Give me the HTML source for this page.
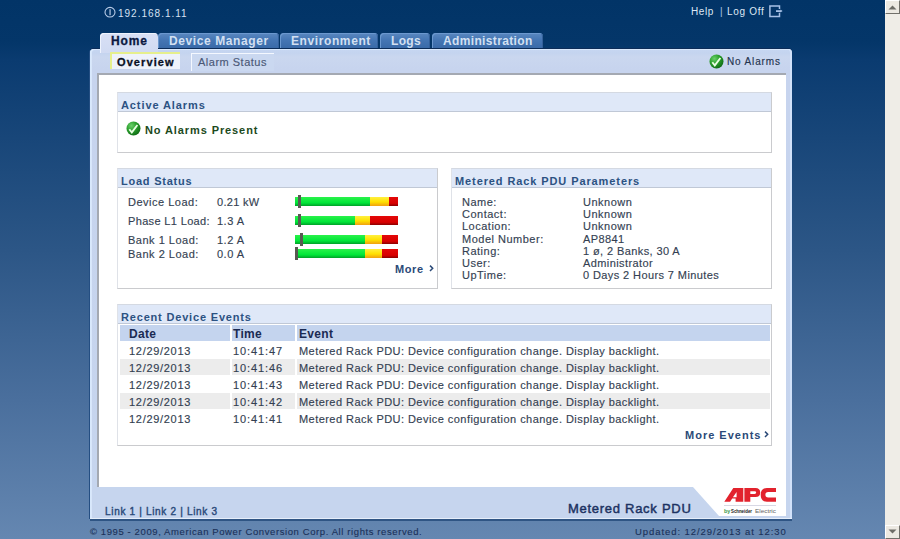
<!DOCTYPE html>
<html><head><meta charset="utf-8">
<style>
*{margin:0;padding:0;box-sizing:border-box}
html,body{width:900px;height:539px;overflow:hidden}
body{position:relative;font-family:"Liberation Sans",sans-serif;font-size:11px;color:#343f52;-webkit-text-stroke:0.15px;
background:linear-gradient(to bottom,#023467 0px,#043669 42px,#0a3b70 60px,#2c5686 250px,#4a6f9d 400px,#6587b1 539px)}
.a{position:absolute;white-space:nowrap;line-height:12px}
.b{font-weight:bold;-webkit-text-stroke:0}
#scroll{position:absolute;left:885px;top:0;width:15px;height:539px;background:#efede7}
.sbtn{position:absolute;left:0;width:15px;height:14px;background:#ece9e2;border:1px solid #fff;border-right-color:#71706a;border-bottom-color:#71706a}
#panel{position:absolute;left:90px;top:49px;width:702px;height:470px;background:linear-gradient(#c6d6f2,#c4d4ef 4px,#cad7ef 8px,#c7d4ee 20px,#c6d5ee);border-radius:4px 4px 0 0;
 box-shadow:inset 1px 1px 0 #d8e8fc,0 -1px 0 #0c2c58,inset 2px 0 0 #d8e6fa,inset -2px 0 0 #d2e2fa,-1px 0 0 #244e82}
#white{position:absolute;left:97px;top:73px;width:689px;height:443px;background:#fff;border-left:2px solid #a4a9b2;border-top:2px solid #a4a9b2}
.tab{position:absolute;top:33px;height:15px;background:linear-gradient(#5a88c0,#4576b4 45%,#3a6aa8);border-radius:4px 4px 0 0;
 box-shadow:inset 1px 1px 0 #6b98cf,inset -1px 0 0 #34609a}
.tt{position:absolute;color:#d3e0f2;font-weight:bold;font-size:12px;white-space:nowrap;line-height:12px;letter-spacing:0.6px;-webkit-text-stroke:0}
.box{position:absolute;border:1px solid #cacbce;border-left-color:#dfe2e8;border-top-color:#d4d9e2;background:#fff}
.hdr{position:absolute;left:0;top:0;right:0;height:19px;background:#dfe8f8;border-bottom:1px solid #c0c8d6}
.ht{position:absolute;color:#2c5282;font-weight:bold;white-space:nowrap;line-height:12px;-webkit-text-stroke:0}
.bar{position:absolute;left:295px;height:9px}
.g{position:absolute;top:0;height:9px;background:linear-gradient(#2af24a,#00e638 65%,#00a028)}
.y{position:absolute;top:0;height:9px;background:linear-gradient(#fff040,#ffe000 55%,#f0a010)}
.r{position:absolute;top:0;height:9px;background:linear-gradient(#e40808,#d80000 70%,#8a0000)}
.mk{position:absolute;top:-2px;width:3px;height:13px;background:#585a52}
.row{position:absolute;left:120px;width:650px;height:17px}
</style></head><body>

<!-- top bar -->
<svg class="a" style="left:104px;top:6px" width="12" height="12" viewBox="0 0 12 12"><ellipse cx="6" cy="6.2" rx="5" ry="4.8" fill="none" stroke="#b8cce8" stroke-width="1.1"/><rect x="5.5" y="3.2" width="1.1" height="6" fill="#c8d8f0"/></svg>
<div class="a" style="left:118px;top:8px;color:#d6e2f2;font-size:10px;letter-spacing:1px;-webkit-text-stroke:0">192.168.1.11</div>
<div class="a" style="left:691px;top:6px;color:#dfe8f4;font-size:10px;letter-spacing:0.55px;-webkit-text-stroke:0">Help</div><div class="a" style="left:720px;top:6px;color:#a9c2e4;font-size:10px;-webkit-text-stroke:0">|</div><div class="a" style="left:727px;top:6px;color:#dfe8f4;font-size:10px;letter-spacing:0.7px;-webkit-text-stroke:0">Log Off</div>
<svg class="a" style="left:768px;top:4px" width="16" height="14" viewBox="0 0 16 14"><path d="M11.5 5V2H1.9V12.5H11.5V8.8" fill="none" stroke="#a6c0e6" stroke-width="1.5"/><path d="M8 7.1H13" fill="none" stroke="#a6c0e6" stroke-width="1.8"/><path d="M12.5 5.6L14.6 7.1 12.5 8.6Z" fill="#a6c0e6"/></svg>

<!-- scrollbar -->
<div id="scroll"><div class="sbtn" style="top:0"></div><div class="sbtn" style="top:525px"></div>
<svg class="a" style="left:3px;top:4px" width="9" height="6"><path d="M0.5 5.5L4.5 1.5 8.5 5.5Z" fill="#6d6c66"/></svg>
<svg class="a" style="left:3px;top:529px" width="9" height="6"><path d="M0.5 0.5L4.5 4.5 8.5 0.5Z" fill="#6d6c66"/></svg>
</div>

<!-- tabs -->
<div class="tab" style="left:158px;width:121px"></div>
<div class="tab" style="left:280px;width:98px"></div>
<div class="tab" style="left:380px;width:50px"></div>
<div class="tab" style="left:432px;width:111px"></div>
<div class="tt" style="left:169px;top:35px">Device Manager</div>
<div class="tt" style="left:291px;top:35px">Environment</div>
<div class="tt" style="left:391px;top:35px;letter-spacing:0.3px">Logs</div>
<div class="tt" style="left:443px;top:35px;letter-spacing:0.35px">Administration</div>

<div id="panel"></div>
<div style="position:absolute;left:100px;top:33px;width:58px;height:20px;background:linear-gradient(#d8e0f5,#d0daf2);border-radius:4px 4px 0 0;box-shadow:inset 1px 1px 0 #eef3fd"></div>
<div class="tt" style="left:111px;top:35px;color:#0b1840;letter-spacing:0.9px;-webkit-text-stroke:0.3px #0b1840">Home</div>

<!-- subtabs -->
<div style="position:absolute;left:110px;top:52px;width:70px;height:17px;background:#eef2fb;border-left:2px solid #e6ef8c;border-top:2px solid #e6ef8c"></div>
<div class="a b" style="left:117px;top:56px;color:#0a1024;letter-spacing:1.1px;-webkit-text-stroke:0.3px #0a1024">Overview</div>
<div style="position:absolute;left:191px;top:53px;width:83px;height:18px;background:#cad8f0;border-left:1px solid #f4f8ff;border-top:1px solid #f4f8ff"></div>
<div class="a" style="left:198px;top:56px;color:#4a5877;letter-spacing:0.5px">Alarm Status</div>

<svg class="a" style="left:709px;top:54px" width="15" height="15" viewBox="0 0 15 15"><defs><radialGradient id="cg" cx="0.35" cy="0.3" r="0.75"><stop offset="0" stop-color="#6ad06a"/><stop offset="0.5" stop-color="#2a9e2c"/><stop offset="1" stop-color="#0e6a14"/></radialGradient></defs><circle cx="7.5" cy="7.5" r="7" fill="url(#cg)"/><path d="M3.3 8.2l2.5 3.2 5.6-7.4" fill="none" stroke="#eaffe4" stroke-width="1.8"/></svg>
<div class="a" style="left:727px;top:56px;color:#24344f;font-size:10px;letter-spacing:0.85px">No Alarms</div>

<div id="white"></div>

<!-- Active Alarms -->
<div class="box" style="left:117px;top:92px;width:655px;height:61px"><div class="hdr"></div></div>
<div class="ht" style="left:121px;top:99px;letter-spacing:0.9px">Active Alarms</div>
<svg class="a" style="left:126px;top:121px" width="15" height="15" viewBox="0 0 15 15"><circle cx="7.5" cy="7.5" r="7" fill="url(#cg)"/><path d="M3.3 8.2l2.5 3.2 5.6-7.4" fill="none" stroke="#eaffe4" stroke-width="1.8"/></svg>
<div class="a b" style="left:145px;top:124px;color:#1c4a1c;letter-spacing:0.9px">No Alarms Present</div>

<!-- Load Status -->
<div class="box" style="left:117px;top:168px;width:321px;height:121px"><div class="hdr"></div></div>
<div class="ht" style="left:121px;top:175px;letter-spacing:0.76px">Load Status</div>
<div class="a" style="left:128px;top:196px;letter-spacing:0.5px">Device Load:</div>
<div class="a" style="left:217px;top:196px;letter-spacing:0.3px">0.21 kW</div>
<div class="a" style="left:128px;top:215px;letter-spacing:0.35px">Phase L1 Load:</div>
<div class="a" style="left:217px;top:215px;letter-spacing:0.5px">1.3 A</div>
<div class="a" style="left:128px;top:234px;letter-spacing:0.5px">Bank 1 Load:</div>
<div class="a" style="left:217px;top:234px;letter-spacing:0.5px">1.2 A</div>
<div class="a" style="left:128px;top:248px;letter-spacing:0.5px">Bank 2 Load:</div>
<div class="a" style="left:217px;top:248px;letter-spacing:0.5px">0.0 A</div>

<div class="bar" style="top:197px;width:103px"><div class="g" style="left:0;width:75px"></div><div class="y" style="left:75px;width:19px"></div><div class="r" style="left:94px;width:9px"></div><div class="mk" style="left:3px"></div></div>
<div class="bar" style="top:216px;width:103px"><div class="g" style="left:0;width:60px"></div><div class="y" style="left:60px;width:15px"></div><div class="r" style="left:75px;width:28px"></div><div class="mk" style="left:3px"></div></div>
<div class="bar" style="top:235px;width:103px"><div class="g" style="left:0;width:70px"></div><div class="y" style="left:70px;width:17px"></div><div class="r" style="left:87px;width:16px"></div><div class="mk" style="left:5px"></div></div>
<div class="bar" style="top:249px;width:103px"><div class="g" style="left:0;width:70px"></div><div class="y" style="left:70px;width:17px"></div><div class="r" style="left:87px;width:16px"></div><div class="mk" style="left:0"></div></div>
<div class="a b" style="left:395px;top:263px;color:#2b4a78;letter-spacing:0.6px">More</div><svg class="a" style="left:428px;top:263px" width="7" height="10"><path d="M2 2.6L4.7 5.3 2 8" fill="none" stroke="#2b4a78" stroke-width="1.5"/></svg>

<!-- Params -->
<div class="box" style="left:451px;top:168px;width:321px;height:121px"><div class="hdr"></div></div>
<div class="ht" style="left:455px;top:175px;letter-spacing:0.9px">Metered Rack PDU Parameters</div>
<div class="a" style="left:462px;top:196px;letter-spacing:0.5px">Name:<br>Contact:<br>Location:</div><div class="a" style="left:462px;top:233px;letter-spacing:0.5px">Model Number:<br>Rating:<br>User:<br>UpTime:</div>
<div class="a" style="left:583px;top:196px;letter-spacing:0.5px">Unknown<br>Unknown<br>Unknown</div><div class="a" style="left:583px;top:233px;letter-spacing:0.4px">AP8841<br>1 ø, 2 Banks, 30 A<br>Administrator<br>0 Days 2 Hours 7 Minutes</div>

<!-- Events -->
<div class="box" style="left:117px;top:304px;width:655px;height:142px"><div class="hdr"></div></div>
<div class="ht" style="left:121px;top:311px;letter-spacing:0.82px">Recent Device Events</div>
<div style="position:absolute;left:120px;top:325px;width:110px;height:16px;background:#c4d4ee"></div>
<div style="position:absolute;left:232px;top:325px;width:63px;height:16px;background:#c4d4ee"></div>
<div style="position:absolute;left:297px;top:325px;width:473px;height:16px;background:#c4d4ee"></div>
<div class="a b" style="left:129px;top:328px;color:#1a2a52;font-size:12px;letter-spacing:0.3px">Date</div>
<div class="a b" style="left:233px;top:328px;color:#1a2a52;font-size:12px;letter-spacing:0.3px">Time</div>
<div class="a b" style="left:299px;top:328px;color:#1a2a52;font-size:12px;letter-spacing:0.3px">Event</div>
<div style="position:absolute;left:120px;top:359px;width:110px;height:16px;background:#ececec"></div>
<div style="position:absolute;left:232px;top:359px;width:63px;height:16px;background:#ececec"></div>
<div style="position:absolute;left:297px;top:359px;width:473px;height:16px;background:#ececec"></div>
<div style="position:absolute;left:120px;top:393px;width:110px;height:16px;background:#ececec"></div>
<div style="position:absolute;left:232px;top:393px;width:63px;height:16px;background:#ececec"></div>
<div style="position:absolute;left:297px;top:393px;width:473px;height:16px;background:#ececec"></div>
<div class="a" style="left:129px;top:343px;line-height:17px;letter-spacing:0.7px">12/29/2013<br>12/29/2013<br>12/29/2013<br>12/29/2013<br>12/29/2013</div>
<div class="a" style="left:233px;top:343px;line-height:17px;letter-spacing:0.9px">10:41:47<br>10:41:46<br>10:41:43<br>10:41:42<br>10:41:41</div>
<div class="a" style="left:299px;top:343px;line-height:17px;letter-spacing:0.45px">Metered Rack PDU: Device configuration change. Display backlight.<br>Metered Rack PDU: Device configuration change. Display backlight.<br>Metered Rack PDU: Device configuration change. Display backlight.<br>Metered Rack PDU: Device configuration change. Display backlight.<br>Metered Rack PDU: Device configuration change. Display backlight.</div>
<div class="a b" style="left:685px;top:429px;letter-spacing:1px;color:#2b4a78">More Events</div><svg class="a" style="left:763px;top:429px" width="7" height="10"><path d="M2 2.6L4.7 5.3 2 8" fill="none" stroke="#2b4a78" stroke-width="1.5"/></svg>

<!-- bottom band -->
<svg class="a" style="left:97px;top:487px" width="689" height="32" viewBox="0 0 689 32"><path d="M0 0H596L622 29H0Z" fill="#c6d5ee"/></svg>
<div class="a" style="left:105px;top:506px;color:#2a4a7a;font-size:10px;letter-spacing:0.68px;-webkit-text-stroke:0.4px #2a4a7a">Link 1 | Link 2 | Link 3</div>
<div class="a" style="left:568px;top:503px;color:#1c3262;font-size:13px;-webkit-text-stroke:0.45px #1c3262;letter-spacing:0.72px">Metered Rack PDU</div>
<!-- APC logo -->
<svg class="a" style="left:720px;top:484px" width="62" height="32" viewBox="0 0 62 32">
<path fill="#e2222d" fill-rule="evenodd" d="M4.3 17.7L13.3 4H23.3V17.7H15.6V14.6H12.2L10.1 17.7ZM12.9 13.2L16.6 8V13.2Z"/>
<path fill="#e2222d" fill-rule="evenodd" d="M24.4 17.7V4H35.5Q40.2 4 40.2 8.5Q40.2 13 35.5 13H30.3V17.7ZM30.3 7.3H34.6Q36.2 7.3 36.2 8.6Q36.2 9.9 34.6 9.9H30.3Z"/>
<path fill="#e2222d" d="M56 4H46.8Q40.7 4 40.7 10.85Q40.7 17.7 46.8 17.7H56V13.6H48.2Q45.4 13.6 45.4 10.85Q45.4 8.1 48.2 8.1H56Z"/>
<rect x="4" y="21.2" width="52" height="0.7" fill="#c8c8d8"/>
<text x="4" y="29" font-family="Liberation Sans" font-weight="bold" font-size="5.5" fill="#3a9a4a">by</text>
<text x="11" y="29" font-family="Liberation Sans" font-weight="bold" font-size="5.5" fill="#1a1a1a" textLength="21" lengthAdjust="spacingAndGlyphs">Schneider</text>
<text x="35" y="29" font-family="Liberation Sans" font-size="5" fill="#666" textLength="21" lengthAdjust="spacingAndGlyphs">Electric</text>
</svg>
<div style="position:absolute;left:90px;top:518px;width:702px;height:1px;background:#e6eefa"></div>
<div style="position:absolute;left:90px;top:519px;width:702px;height:2px;background:#2f5584"></div>

<div class="a" style="left:90px;top:526px;color:#1a3058;font-size:9.5px;letter-spacing:0.6px;-webkit-text-stroke:0.1px">© 1995 - 2009, American Power Conversion Corp. All rights reserved.</div>
<div class="a" style="left:635px;top:526px;color:#1a3058;font-size:9.5px;letter-spacing:0.93px;-webkit-text-stroke:0.1px">Updated: 12/29/2013 at 12:30</div>
</body></html>
